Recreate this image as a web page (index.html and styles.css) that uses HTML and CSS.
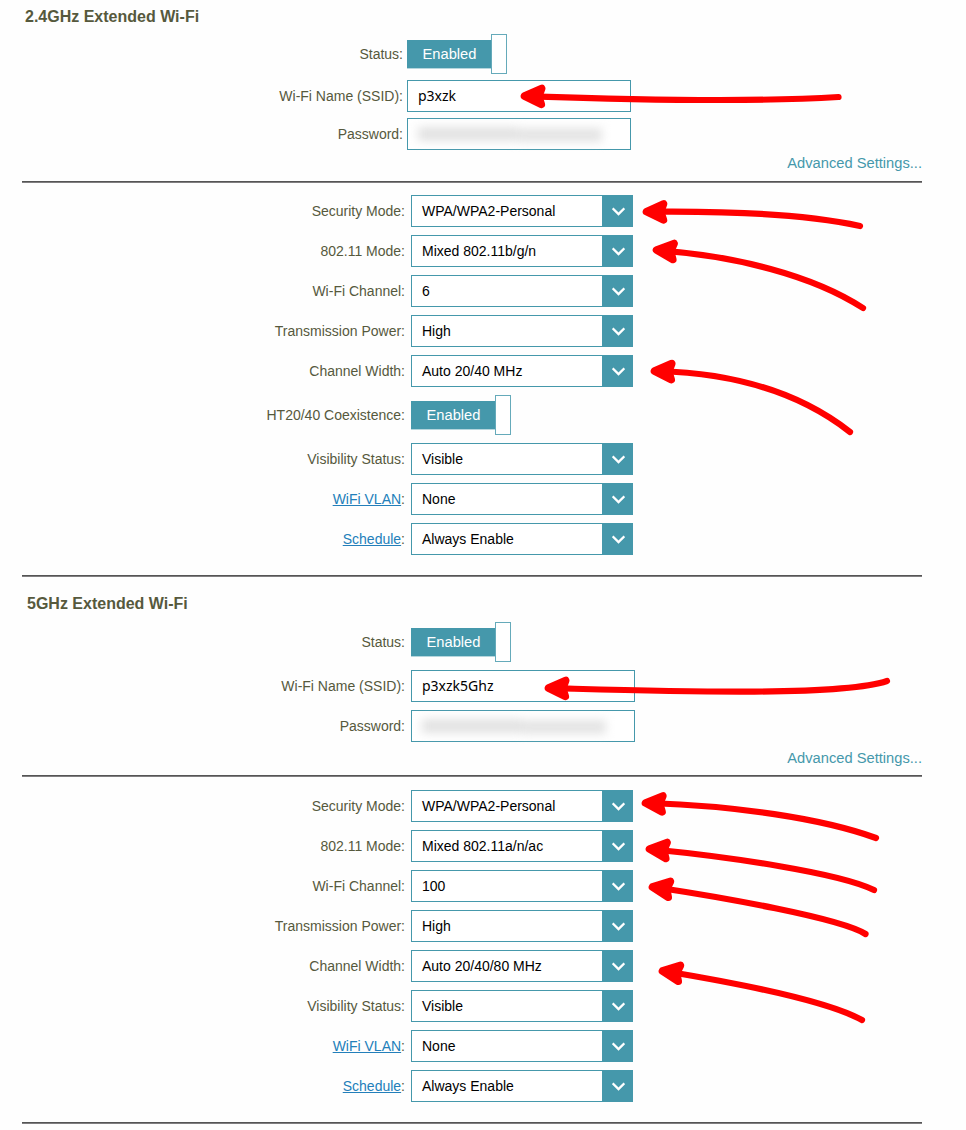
FILE: index.html
```
<!DOCTYPE html>
<html lang="en">
<head>
<meta charset="utf-8">
<title>Extended Wi-Fi</title>
<link rel="stylesheet" href="styles.css">
</head>
<body>
<svg width="0" height="0" class="defs">
  <symbol id="chev" viewBox="0 0 13 9"><path d="M.7 1.300 6.500 7.100 12.300 1.300" fill="none" stroke="#fff" stroke-width="2.200"/></symbol>
</svg>
<main class="page">
  <section class="basic basic-24">
    <h2>2.4GHz Extended Wi-Fi</h2>
    <div class="row tall"><label>Status:</label><div class="toggle"><span>Enabled</span><i></i></div></div>
    <div class="row"><label>Wi-Fi Name (SSID):</label><div class="input">p3xzk</div></div>
    <div class="row"><label>Password:</label><div class="input"><span class="mask"><b></b><b></b></span></div></div>
    <a class="advanced">Advanced Settings...</a>
  </section>
  <section class="panel panel-24">
    <div class="row"><label>Security Mode:</label><div class="select"><span>WPA/WPA2-Personal</span><em><svg><use href="#chev"/></svg></em></div></div>
    <div class="row"><label>802.11 Mode:</label><div class="select"><span>Mixed 802.11b/g/n</span><em><svg><use href="#chev"/></svg></em></div></div>
    <div class="row"><label>Wi-Fi Channel:</label><div class="select"><span>6</span><em><svg><use href="#chev"/></svg></em></div></div>
    <div class="row"><label>Transmission Power:</label><div class="select"><span>High</span><em><svg><use href="#chev"/></svg></em></div></div>
    <div class="row"><label>Channel Width:</label><div class="select"><span>Auto 20/40 MHz</span><em><svg><use href="#chev"/></svg></em></div></div>
    <div class="row tall"><label>HT20/40 Coexistence:</label><div class="toggle"><span>Enabled</span><i></i></div></div>
    <div class="row"><label>Visibility Status:</label><div class="select"><span>Visible</span><em><svg><use href="#chev"/></svg></em></div></div>
    <div class="row"><label><a>WiFi VLAN</a>:</label><div class="select"><span>None</span><em><svg><use href="#chev"/></svg></em></div></div>
    <div class="row"><label><a>Schedule</a>:</label><div class="select"><span>Always Enable</span><em><svg><use href="#chev"/></svg></em></div></div>
  </section>
  <section class="basic basic-5">
    <h2>5GHz Extended Wi-Fi</h2>
    <div class="row tall"><label>Status:</label><div class="toggle"><span>Enabled</span><i></i></div></div>
    <div class="row"><label>Wi-Fi Name (SSID):</label><div class="input">p3xzk5Ghz</div></div>
    <div class="row"><label>Password:</label><div class="input"><span class="mask"><b></b><b></b></span></div></div>
    <a class="advanced">Advanced Settings...</a>
  </section>
  <section class="panel panel-5">
    <div class="row"><label>Security Mode:</label><div class="select"><span>WPA/WPA2-Personal</span><em><svg><use href="#chev"/></svg></em></div></div>
    <div class="row"><label>802.11 Mode:</label><div class="select"><span>Mixed 802.11a/n/ac</span><em><svg><use href="#chev"/></svg></em></div></div>
    <div class="row"><label>Wi-Fi Channel:</label><div class="select"><span>100</span><em><svg><use href="#chev"/></svg></em></div></div>
    <div class="row"><label>Transmission Power:</label><div class="select"><span>High</span><em><svg><use href="#chev"/></svg></em></div></div>
    <div class="row"><label>Channel Width:</label><div class="select"><span>Auto 20/40/80 MHz</span><em><svg><use href="#chev"/></svg></em></div></div>
    <div class="row"><label>Visibility Status:</label><div class="select"><span>Visible</span><em><svg><use href="#chev"/></svg></em></div></div>
    <div class="row"><label><a>WiFi VLAN</a>:</label><div class="select"><span>None</span><em><svg><use href="#chev"/></svg></em></div></div>
    <div class="row"><label><a>Schedule</a>:</label><div class="select"><span>Always Enable</span><em><svg><use href="#chev"/></svg></em></div></div>
  </section>
</main>
<svg class="arrows" viewBox="0 0 966 1130">
  <g fill="none" stroke="red" stroke-width="6.200" stroke-linecap="round">
    <path d="M530 96.300C640 100 760 102 838.500 97"/>
    <path d="M652 211.700C730 211 810 215 860 226"/>
    <path d="M660 250.500C735 256 812 275 863 308"/>
    <path d="M658 371C727 373 794 388 850 432"/>
    <path d="M554 688.200C660 691 840 697 887 681"/>
    <path d="M650 803C735 806 821 818 876 838"/>
    <path d="M654 849.500C730 857 840 873 874 890"/>
    <path d="M657 887.500C720 897 840 918 865.500 934"/>
    <path d="M667 971.500C730 982 825 1000 862 1020"/>
  </g>
  <g fill="red" stroke="red" stroke-width="7.600" stroke-linejoin="round">
    <path transform="translate(524.500 96) rotate(1.500)" d="M0 0 17-8 14.300 0 17 8Z"/>
    <path transform="translate(646.500 211.700) rotate(.5)" d="M0 0 17-8 14.300 0 17 8Z"/>
    <path transform="translate(656.500 250) rotate(5)" d="M0 0 17-8 14.300 0 17 8Z"/>
    <path transform="translate(654.500 371) rotate(2)" d="M0 0 17-8 14.300 0 17 8Z"/>
    <path transform="translate(548.500 688) rotate(1.500)" d="M0 0 17-8 14.300 0 17 8Z"/>
    <path transform="translate(645.500 803) rotate(3)" d="M0 0 17-8 14.300 0 17 8Z"/>
    <path transform="translate(649.500 849) rotate(5)" d="M0 0 17-8 14.300 0 17 8Z"/>
    <path transform="translate(652.500 887) rotate(8)" d="M0 0 17-8 14.300 0 17 8Z"/>
    <path transform="translate(662.500 971) rotate(8)" d="M0 0 17-8 14.300 0 17 8Z"/>
  </g>
</svg>
</body>
</html>
```
FILE: styles.css
```
* { box-sizing: border-box; }
body { margin: 0; background: #fefefe; font: 14px/20px "Liberation Sans", Arial, sans-serif; color: #56593d; }
.defs { position: absolute; }
.page { width: 966px; height: 1130px; padding-left: 22px; overflow: hidden; }
section { width: 900px; display: flex; flex-direction: column; margin-bottom: 1px; border-bottom: 1px solid #555; box-shadow: 0 1px 0 #807e80; }
h2 { margin: 0; font-size: 16px; line-height: 20px; font-weight: bold; }
.basic-24 { height: 182px; padding-top: 7px; --label: 381px; --gap: 4px; }
.basic-24 h2 { padding-left: 3px; margin-bottom: 7px; }
.basic-24 .row { margin-bottom: 6px; }
.basic-24 .advanced { margin-top: -3px; }
.basic-5 { height: 199px; padding-top: 17px; }
.basic-5 h2 { padding-left: 5px; margin-bottom: 8px; }
.basic-5 .row { margin-bottom: 8px; }
.basic-5 .advanced { margin-top: -2px; }
.panel { gap: 8px; }
.panel-24 { height: 393px; padding-top: 12px; }
.panel-5 { height: 346px; padding-top: 13px; }
.row { display: grid; grid-template-columns: var(--label, 383px) auto; column-gap: var(--gap, 6px); justify-content: start; align-items: center; height: 32px; flex: none; }
.tall { height: 40px; }
label { text-align: right; white-space: nowrap; }
label a { color: #237fba; text-decoration: underline; }
.input { width: 224px; height: 32px; border: 1px solid #4598ab; background: #fff; color: #000; padding: 5px 10px; font-family: "Noto Sans", sans-serif; }
.select { display: flex; width: 222px; height: 32px; border: 1px solid #4598ab; background: #fff; color: #000; }
.select span { flex: 1; padding: 5px 10px; white-space: nowrap; }
.select em { width: 30px; background: #4598ab; display: flex; justify-content: center; align-items: center; }
.select svg { width: 13px; height: 9px; margin: 1px 0 0 3px; }
.toggle { display: flex; align-items: center; height: 40px; }
.toggle span { width: 84px; height: 29px; background: #4598ab; border-bottom: 1px solid #b5d6dd; color: #fff; font-size: 14.7px; line-height: 28px; padding-left: 1px; text-align: center; }
.toggle i { width: 16px; height: 40px; border: 1px solid #65aaba; background: #fff; }
.advanced { align-self: flex-end; color: #4598ab; font-size: 14.7px; line-height: 20px; }
.mask { display: flex; height: 20px; align-items: center; filter: blur(5px); }
.mask b { width: 100px; height: 14px; background: #e2e2e2; }
.mask b + b { width: 84px; height: 14px; margin-top: 1px; background: #e4e4e4; }
.arrows { position: absolute; left: 0; top: 0; width: 966px; height: 1130px; filter: blur(.5px); }
```
